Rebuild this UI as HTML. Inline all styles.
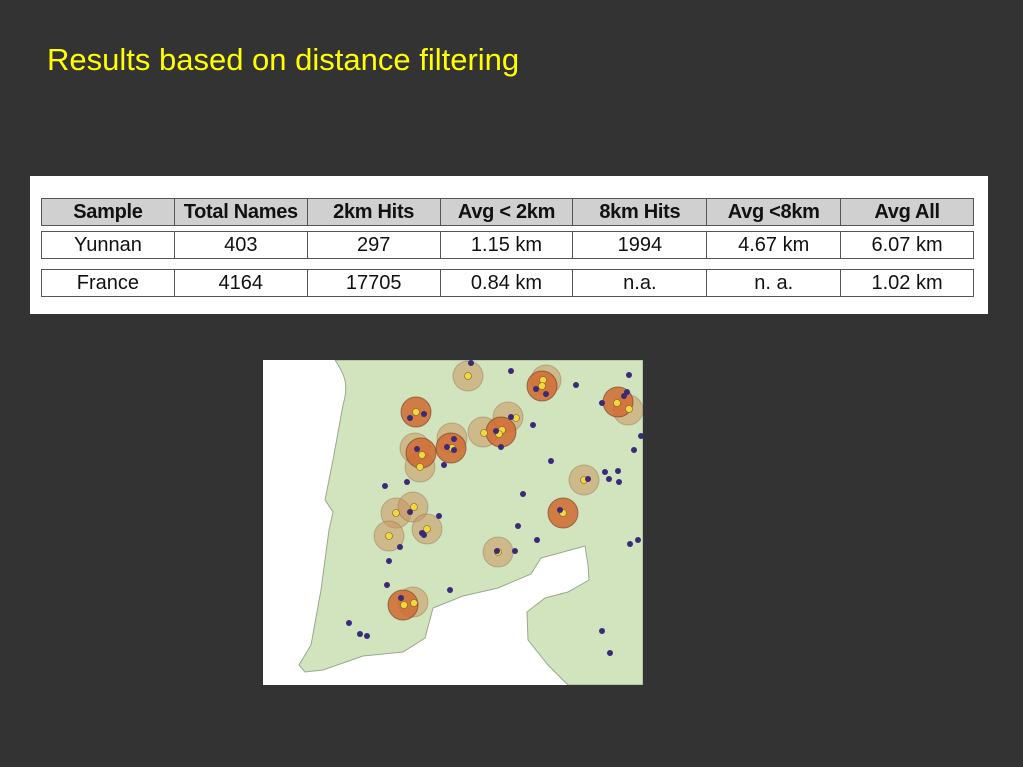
<!DOCTYPE html>
<html><head><meta charset="utf-8"><style>
body{margin:0;width:1023px;height:767px;background:#333333;position:relative;overflow:hidden;font-family:"Liberation Sans",sans-serif}
.t{position:absolute;left:47px;top:42px;color:#ffff00;font-size:31px;white-space:nowrap}
.panel{position:absolute;left:30px;top:176px;width:958px;height:138px;background:#fff}
.row{position:absolute;left:11px;width:933px;height:28px;border:1px solid #555;display:flex;box-sizing:border-box}
.row div{border-left:1px solid #555;text-align:center;font-size:20px;line-height:27px;color:#111}
.row div:first-child{border-left:none}
.h{background:#d0d0d0}
.h div{font-weight:bold;letter-spacing:-0.3px}
</style></head><body>
<div class="t">Results based on distance filtering</div>
<div class="panel">
<div class="row h" style="top:22px"><div style="width:133px">Sample</div><div style="width:133px">Total Names</div><div style="width:133px">2km Hits</div><div style="width:133px">Avg &lt; 2km</div><div style="width:134px">8km Hits</div><div style="width:134px">Avg &lt;8km</div><div style="width:133px">Avg All</div></div>
<div class="row" style="top:55px"><div style="width:133px">Yunnan</div><div style="width:133px">403</div><div style="width:133px">297</div><div style="width:133px">1.15 km</div><div style="width:134px">1994</div><div style="width:134px">4.67 km</div><div style="width:133px">6.07 km</div></div>
<div class="row" style="top:93px"><div style="width:133px">France</div><div style="width:133px">4164</div><div style="width:133px">17705</div><div style="width:133px">0.84 km</div><div style="width:134px">n.a.</div><div style="width:134px">n. a.</div><div style="width:133px">1.02 km</div></div>
</div>
<svg style="position:absolute;left:263px;top:360px" width="380" height="325" viewBox="0 0 380 325">
<rect width="380" height="325" fill="#fff"/>
<path d="M72,0 C82,15 86,25 80,45 L70,100 L62,140 L70,152 L66,170 L58,230 L48,285 L36,305 L42,312 L60,310 L100,296 L140,292 L162,278 L170,248 L200,236 L235,228 L268,214 L278,198 L300,192 L322,186 L325,205 L326,220 L305,232 L282,238 L264,252 L265,280 L285,305 L305,325 L380,325 L380,0 Z" fill="#d2e4be" stroke="#9aa890" stroke-width="1"/>
<g fill="#c8955f" fill-opacity="0.55" stroke="#8a6a4a" stroke-opacity="0.4">
<circle cx="205" cy="16" r="15"/><circle cx="283" cy="20" r="15"/><circle cx="245" cy="57" r="15"/><circle cx="220" cy="72" r="15"/><circle cx="189" cy="78" r="15"/><circle cx="152" cy="88" r="15"/><circle cx="157" cy="107" r="15"/><circle cx="365" cy="50" r="15"/><circle cx="321" cy="120" r="15"/><circle cx="133" cy="153" r="15"/><circle cx="150" cy="147" r="15"/><circle cx="126" cy="176" r="15"/><circle cx="164" cy="169" r="15"/><circle cx="235" cy="192" r="15"/><circle cx="150" cy="242" r="15"/>
</g>
<g fill="#d06a30" fill-opacity="0.85" stroke="#6a3a20" stroke-opacity="0.6">
<circle cx="279" cy="26" r="15"/><circle cx="153" cy="52" r="15"/><circle cx="238" cy="72" r="15"/><circle cx="188" cy="88" r="15"/><circle cx="158" cy="93" r="15"/><circle cx="355" cy="42" r="15"/><circle cx="300" cy="153" r="15"/><circle cx="140" cy="245" r="15"/>
</g>
<g fill="#f0d840" stroke="#806020" stroke-width="0.6">
<circle cx="205" cy="16" r="3.5"/><circle cx="280" cy="20" r="3.5"/><circle cx="279" cy="26" r="3.5"/><circle cx="153" cy="52" r="3.5"/><circle cx="239" cy="70" r="3.5"/><circle cx="236" cy="74" r="3.5"/><circle cx="221" cy="73" r="3.5"/><circle cx="253" cy="58" r="3.5"/><circle cx="189" cy="88" r="3.5"/><circle cx="159" cy="95" r="3.5"/><circle cx="157" cy="107" r="3.5"/><circle cx="354" cy="43" r="3.5"/><circle cx="366" cy="49" r="3.5"/><circle cx="321" cy="120" r="3.5"/><circle cx="300" cy="153" r="3.5"/><circle cx="133" cy="153" r="3.5"/><circle cx="151" cy="147" r="3.5"/><circle cx="126" cy="176" r="3.5"/><circle cx="164" cy="169" r="3.5"/><circle cx="235" cy="192" r="3.5"/><circle cx="141" cy="245" r="3.5"/><circle cx="151" cy="243" r="3.5"/>
</g>
<g fill="#3a2a78">
<circle cx="208" cy="3" r="3"/><circle cx="248" cy="11" r="3"/><circle cx="313" cy="25" r="3"/><circle cx="366" cy="15" r="3"/><circle cx="273" cy="29" r="3"/><circle cx="283" cy="34" r="3"/><circle cx="147" cy="58" r="3"/><circle cx="161" cy="54" r="3"/><circle cx="248" cy="57" r="3"/><circle cx="270" cy="65" r="3"/><circle cx="233" cy="71" r="3"/><circle cx="238" cy="87" r="3"/><circle cx="191" cy="79" r="3"/><circle cx="184" cy="87" r="3"/><circle cx="191" cy="90" r="3"/><circle cx="154" cy="89" r="3"/><circle cx="181" cy="105" r="3"/><circle cx="339" cy="43" r="3"/><circle cx="361" cy="36" r="3"/><circle cx="364" cy="32" r="3"/><circle cx="378" cy="76" r="3"/><circle cx="371" cy="90" r="3"/><circle cx="288" cy="101" r="3"/><circle cx="325" cy="119" r="3"/><circle cx="342" cy="112" r="3"/><circle cx="355" cy="111" r="3"/><circle cx="346" cy="119" r="3"/><circle cx="356" cy="122" r="3"/><circle cx="122" cy="126" r="3"/><circle cx="144" cy="122" r="3"/><circle cx="260" cy="134" r="3"/><circle cx="297" cy="150" r="3"/><circle cx="147" cy="152" r="3"/><circle cx="176" cy="156" r="3"/><circle cx="255" cy="166" r="3"/><circle cx="159" cy="173" r="3"/><circle cx="161" cy="175" r="3"/><circle cx="274" cy="180" r="3"/><circle cx="137" cy="187" r="3"/><circle cx="367" cy="184" r="3"/><circle cx="375" cy="180" r="3"/><circle cx="234" cy="191" r="3"/><circle cx="252" cy="191" r="3"/><circle cx="126" cy="201" r="3"/><circle cx="124" cy="225" r="3"/><circle cx="187" cy="230" r="3"/><circle cx="138" cy="238" r="3"/><circle cx="86" cy="263" r="3"/><circle cx="97" cy="274" r="3"/><circle cx="104" cy="276" r="3"/><circle cx="339" cy="271" r="3"/><circle cx="347" cy="293" r="3"/>
</g>
</svg>
</body></html>
